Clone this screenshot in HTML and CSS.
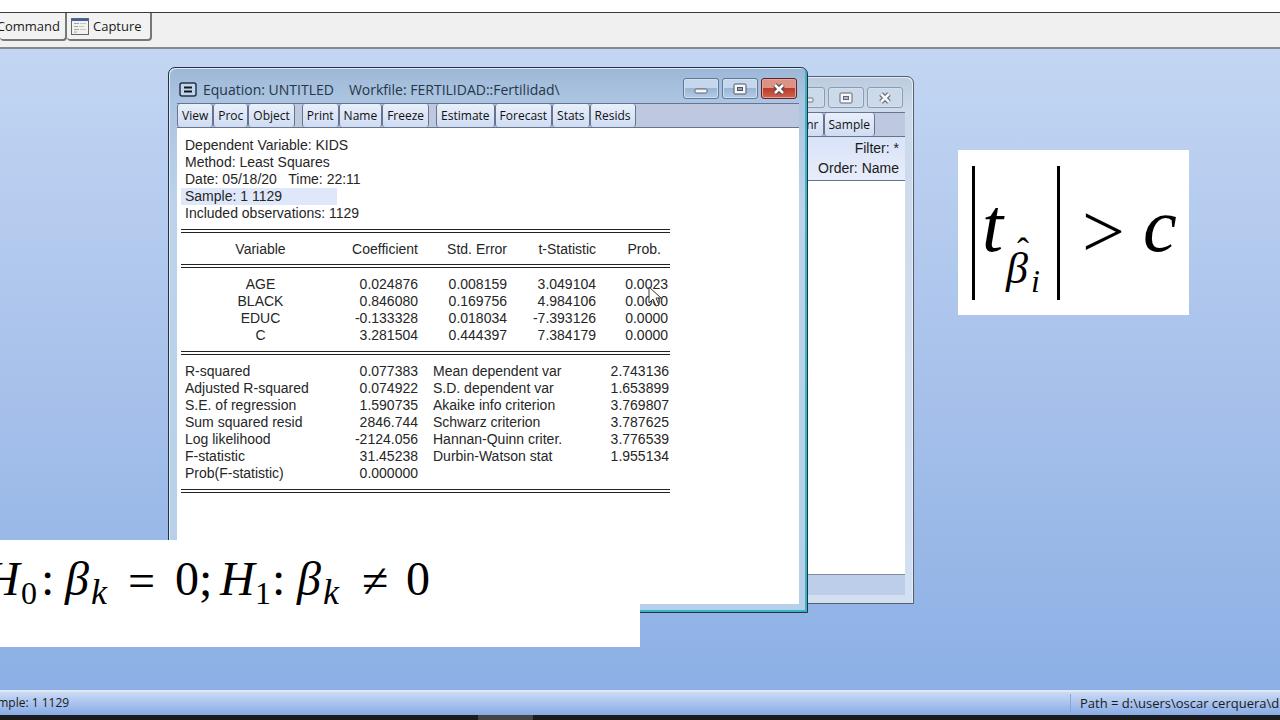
FILE: index.html
```html
<!DOCTYPE html>
<html lang="en">
<head>
<meta charset="utf-8">
<title>Equation: UNTITLED</title>
<link rel="stylesheet" href="styles.css">
</head>
<body>
<div class="app">
  <nav class="tabs">
    <button class="tab tab-command">Command</button>
    <button class="tab tab-capture">
      <svg width="18" height="17" viewBox="0 0 18 17"><rect x=".5" y=".5" width="17" height="16" fill="#f3f3ee" stroke="#60656c"/><path d="M1 2h16" stroke="#3c62ae" stroke-width="2"/><path d="M3 5.500h5M3 8.500h4M3 11.500h5M3 14h3" stroke="#a0a4aa"/><path d="M9 5.500h6M8 8.500h5M9 11.500h6" stroke="#c3c6c8"/></svg>
      Capture</button>
  </nav>

  <main class="desktop">
    <section class="window workfile">
      <header class="titlebar">
        <div class="controls">
          <button class="ctl" aria-label="Minimize"><svg width="14" height="12" viewBox="0 0 14 12"><rect x="1" y="6" width="12" height="4" rx="1" fill="#eef2f7" stroke="#6e7787"/></svg></button>
          <button class="ctl" aria-label="Maximize"><svg width="14" height="12" viewBox="0 0 14 12"><rect x="1" y="1" width="12" height="10" rx="1" fill="#f4f6fa" stroke="#5f6777"/><rect x="4.500" y="4.500" width="5" height="3" fill="#aeb8c8" stroke="#5f6777"/></svg></button>
          <button class="ctl" aria-label="Close"><svg width="14" height="12" viewBox="0 0 14 12"><path d="M3 2l8 8M11 2l-8 8" stroke="#626a79" stroke-width="5"/><path d="M3 2l8 8M11 2l-8 8" stroke="#f4f6fa" stroke-width="2.500"/></svg></button>
        </div>
      </header>
      <div class="toolbar toolbar-end"><button>Genr</button><button>Sample</button></div>
      <div class="filter"><p>Filter: *</p><p>Order: Name</p></div>
      <div class="pane"></div>
      <div class="pane-foot"></div>
    </section>

    <section class="window equation">
      <header class="titlebar">
        <svg class="sysicon" width="18" height="15" viewBox="0 0 18 15"><rect x="1" y="1" width="16" height="13" rx="2" fill="#c2d5ec" stroke="#22344c" stroke-width="1.500"/><path d="M5 5.500h8M5 9.500h8" stroke="#101820" stroke-width="2"/></svg>
        <h1>Equation: UNTITLED<span>Workfile: FERTILIDAD::Fertilidad\</span></h1>
        <div class="controls">
          <button class="ctl" aria-label="Minimize"><svg width="14" height="12" viewBox="0 0 14 12"><rect x="1" y="6" width="12" height="4" rx="1" fill="#f6f6f6" stroke="#5c6472"/></svg></button>
          <button class="ctl" aria-label="Maximize"><svg width="14" height="12" viewBox="0 0 14 12"><rect x="1" y="1" width="12" height="10" rx="1" fill="#f6f6f6" stroke="#4d5564"/><rect x="4.500" y="4.500" width="5" height="3" fill="#8ea5c6" stroke="#4d5564"/></svg></button>
          <button class="ctl close" aria-label="Close"><svg width="14" height="12" viewBox="0 0 14 12"><path d="M3 2l8 8M11 2l-8 8" stroke="#57474c" stroke-width="5"/><path d="M3 2l8 8M11 2l-8 8" stroke="#fff" stroke-width="2.500"/></svg></button>
        </div>
      </header>
      <div class="toolbar">
        <div class="group"><button>View</button><button>Proc</button><button>Object</button></div>
        <div class="group"><button>Print</button><button>Name</button><button>Freeze</button></div>
        <div class="group"><button>Estimate</button><button>Forecast</button><button>Stats</button><button>Resids</button></div>
      </div>
      <div class="output">
        <p>Dependent Variable: KIDS</p>
        <p>Method: Least Squares</p>
        <p>Date: 05/18/20 &nbsp; Time: 22:11</p>
        <p class="selected">Sample: 1 1129</p>
        <p>Included observations: 1129</p>
        <div class="rule"></div>
        <table class="coef head">
          <colgroup><col class="c1"><col class="c2"><col class="c3"><col class="c3"><col class="c4"></colgroup>
          <tr><th>Variable</th><th>Coefficient</th><th>Std. Error</th><th>t-Statistic</th><th class="prob">Prob.</th></tr>
        </table>
        <div class="rule"></div>
        <table class="coef">
          <colgroup><col class="c1"><col class="c2"><col class="c3"><col class="c3"><col class="c4"></colgroup>
          <tr><td>AGE</td><td>0.024876</td><td>0.008159</td><td>3.049104</td><td>0.0023</td></tr>
          <tr><td>BLACK</td><td>0.846080</td><td>0.169756</td><td>4.984106</td><td>0.0000</td></tr>
          <tr><td>EDUC</td><td>-0.133328</td><td>0.018034</td><td>-7.393126</td><td>0.0000</td></tr>
          <tr><td>C</td><td>3.281504</td><td>0.444397</td><td>7.384179</td><td>0.0000</td></tr>
        </table>
        <div class="rule"></div>
        <table class="stats">
          <colgroup><col class="c1"><col class="c2"><col class="s3"><col class="s4"></colgroup>
          <tr><td>R-squared</td><td>0.077383</td><td>Mean dependent var</td><td>2.743136</td></tr>
          <tr><td>Adjusted R-squared</td><td>0.074922</td><td>S.D. dependent var</td><td>1.653899</td></tr>
          <tr><td>S.E. of regression</td><td>1.590735</td><td>Akaike info criterion</td><td>3.769807</td></tr>
          <tr><td>Sum squared resid</td><td>2846.744</td><td>Schwarz criterion</td><td>3.787625</td></tr>
          <tr><td>Log likelihood</td><td>-2124.056</td><td>Hannan-Quinn criter.</td><td>3.776539</td></tr>
          <tr><td>F-statistic</td><td>31.45238</td><td>Durbin-Watson stat</td><td>1.955134</td></tr>
          <tr><td>Prob(F-statistic)</td><td>0.000000</td><td></td><td></td></tr>
        </table>
        <div class="rule"></div>
      </div>
    </section>

    <svg class="cursor" width="14" height="22" viewBox="0 0 14 22"><path d="M1 1v16l4-4 3 7 3-1-3-7h5z" fill="#fff" stroke="#333"/></svg>

    <svg class="note tstat" width="231" height="165" viewBox="0 0 231 165">
      <path d="M15.500 16v134M100.500 16v134" stroke="#000" stroke-width="3"/>
      <text x="24" y="101" class="i t76">t</text>
      <text x="59" y="113" class="t36">ˆ</text>
      <text x="48" y="133" class="i t44">β</text>
      <text x="73" y="142" class="i t32">i</text>
      <text x="124" y="107" class="t76">&gt;</text>
      <text x="185" y="101" class="i t76">c</text>
    </svg>

    <svg class="note hypothesis" width="640" height="107" viewBox="0 0 640 107">
      <text x="-15" y="55" class="i t48">H</text><text x="21" y="64" class="t32">0</text><text x="41" y="55" class="t48">:</text>
      <text x="65" y="55" class="i t48">β</text><text x="91" y="64" class="i t36">k</text>
      <text x="128" y="57" class="t48">=</text><text x="175" y="55" class="t48">0</text><text x="199" y="55" class="t48">;</text>
      <text x="220" y="55" class="i t48">H</text><text x="255" y="64" class="t32">1</text><text x="272" y="55" class="t48">:</text>
      <text x="297" y="55" class="i t48">β</text><text x="323" y="64" class="i t36">k</text>
      <text x="362" y="57" class="t48">≠</text><text x="406" y="55" class="t48">0</text>
    </svg>
  </main>

  <footer class="status"><span class="sample">Sample: 1 1129</span><span class="path">Path = d:\users\oscar cerquera\d</span></footer>
  <div class="taskbar"><span></span></div>
</div>
</body>
</html>
```
FILE: styles.css
```css
* { box-sizing: border-box; }
body, p, h1 { margin: 0; font-weight: normal; }
body { font-family: "Open Sans", "Noto Sans", sans-serif; font-size: 13px; color: #1a1a1a; overflow: hidden; }
button { font: inherit; color: inherit; margin: 0; }
svg { display: block; flex: none; }

.app { display: flex; flex-direction: column; height: 100vh; padding-top: 12px; background: #fff; }
.tabs { display: flex; align-items: flex-start; flex: none; height: 37px; background: #f0f0f0; border-top: 1px solid #3a3a3a; border-bottom: 2px solid #858a92; }
.tab { display: flex; align-items: center; gap: 4px; height: 28px; padding: 0 8px 0 4px; background: #f2f2f2; border: solid #777; border-width: 0 2px 2px 0; border-radius: 0 0 4px 4px; }
.tab-command { width: 67px; padding: 0 5px 0 0; justify-content: flex-end; }
.tab-capture { width: 85px; }

.desktop { position: relative; flex: 1; overflow: hidden; background: linear-gradient(#c3d6f3, #a6c0ea 55%, #8cb0e5); }
.window { position: absolute; display: flex; flex-direction: column; padding: 0 8px 8px; border: 1px solid #26323f; border-radius: 7px 7px 0 0; }
.equation { left: 168px; top: 18px; width: 640px; height: 546px; background: linear-gradient(#9db8d6, #abc4e1 32px, #bdd3ec 140px, #b7cfe8); box-shadow: inset -2px -2px #35b5c6, inset 1px 1px #dce9f6; }
.workfile { left: 560px; top: 27px; width: 354px; height: 528px; background: linear-gradient(#bccbdd, #ccdaec 32px, #d3e0f1); border-color: #565d6b; box-shadow: inset -1px 1px #e4edf8; }
.titlebar { display: flex; align-items: center; flex: none; height: 35px; padding: 8px 2px 0; }
.sysicon { margin-right: 6px; }
h1 { font-size: 14px; color: #26364a; white-space: nowrap; }
h1 span { margin-left: 15px; }
.controls { display: flex; gap: 3px; height: 21px; margin-left: auto; align-self: flex-start; margin-top: 2px; }
.ctl { display: flex; align-items: center; justify-content: center; width: 36px; padding: 0; border: 1px solid #5e7997; border-radius: 3px; background: linear-gradient(#c5d7ec 45%, #9bb6d4 50%, #b5cbe4); box-shadow: inset 0 0 0 1px #d1e0f0; }
.workfile .ctl { background: #ccd9e9; border-color: #8c9cb2; }
.ctl.close { background: linear-gradient(#dc9385 45%, #bd3b28 50%, #cf6450); border-color: #5e252a; box-shadow: inset 0 0 0 1px #e5a499; }

.toolbar { display: flex; gap: 7px; flex: none; height: 25px; background: #bec9df; border-top: 1px solid #66758d; border-bottom: 1px solid #66758d; font-size: 12px; }
.group { display: flex; }
.toolbar button { padding: 0 4px; border: solid #66758d; border-width: 0 1px 0 1px; border-radius: 3px; background: linear-gradient(#e9effb, #cfdcf2); color: #111; }
.toolbar-end { gap: 0; justify-content: flex-end; padding-right: 30px; }
.filter { flex: none; height: 44px; padding: 1px 6px; text-align: right; background: linear-gradient(#d9e3f8, #e7edfa); border-bottom: 1px solid #66758d; font: 14px/20px "Liberation Sans", Arial, sans-serif; }
.pane { flex: 1; background: #fff; }
.pane-foot { height: 21px; background: #bdceeb; border-top: 1px solid #7f8ca3; }

.output { flex: 1; padding: 9px 129px 0 4px; background: #fff; font: 14px/17px "Liberation Sans", Arial, sans-serif; color: #262626; }
.output p { padding-left: 4px; }
.output .selected { width: 156px; background: #dfe8fa; }
.rule { height: 4px; margin: 7px 0 8px; border: solid #222; border-width: 1px 0; }
table { width: 100%; table-layout: fixed; border-collapse: collapse; }
td, th { padding: 0; font-weight: normal; text-align: right; white-space: nowrap; }
.head + .rule { margin-top: 6px; }
.coef td:first-child, .coef th:first-child { text-align: center; }
.coef td:last-child { padding-right: 2px; }
.coef .prob { padding-right: 9px; }
.c1 { width: 159px; }
.c2 { width: 78px; }
.c3 { width: 89px; }
.s3 { width: 150px; }
.stats td:first-child { text-align: left; padding-left: 4px; }
.stats td:nth-child(3) { text-align: left; padding-left: 15px; }
.stats td:last-child { padding-right: 1px; }

.cursor { position: absolute; left: 648px; top: 237px; }
.note { position: absolute; background: #fff; font-family: "Liberation Serif", "Times New Roman", serif; }
.tstat { left: 958px; top: 101px; }
.hypothesis { left: 0; top: 491px; }
.i { font-style: italic; }
.t32 { font-size: 32px; }
.t36 { font-size: 36px; }
.t44 { font-size: 44px; }
.t48 { font-size: 48px; }
.t76 { font-size: 76px; }

.status { display: flex; flex: none; justify-content: space-between; align-items: center; height: 25px; padding-bottom: 2px; background: linear-gradient(#cbdaf5, #87abe5); border-top: 2px solid #dfe8f7; font-size: 12px; white-space: nowrap; overflow: hidden; }
.sample { margin-left: -16px; }
.path { width: 210px; padding-left: 9px; border-left: 1px solid #8ba4cf; font-size: 13px; }
.taskbar { flex: none; height: 5px; background: #1b1b1d; }
.taskbar span { display: block; width: 55px; height: 5px; margin-left: 478px; background: #444; }
```
